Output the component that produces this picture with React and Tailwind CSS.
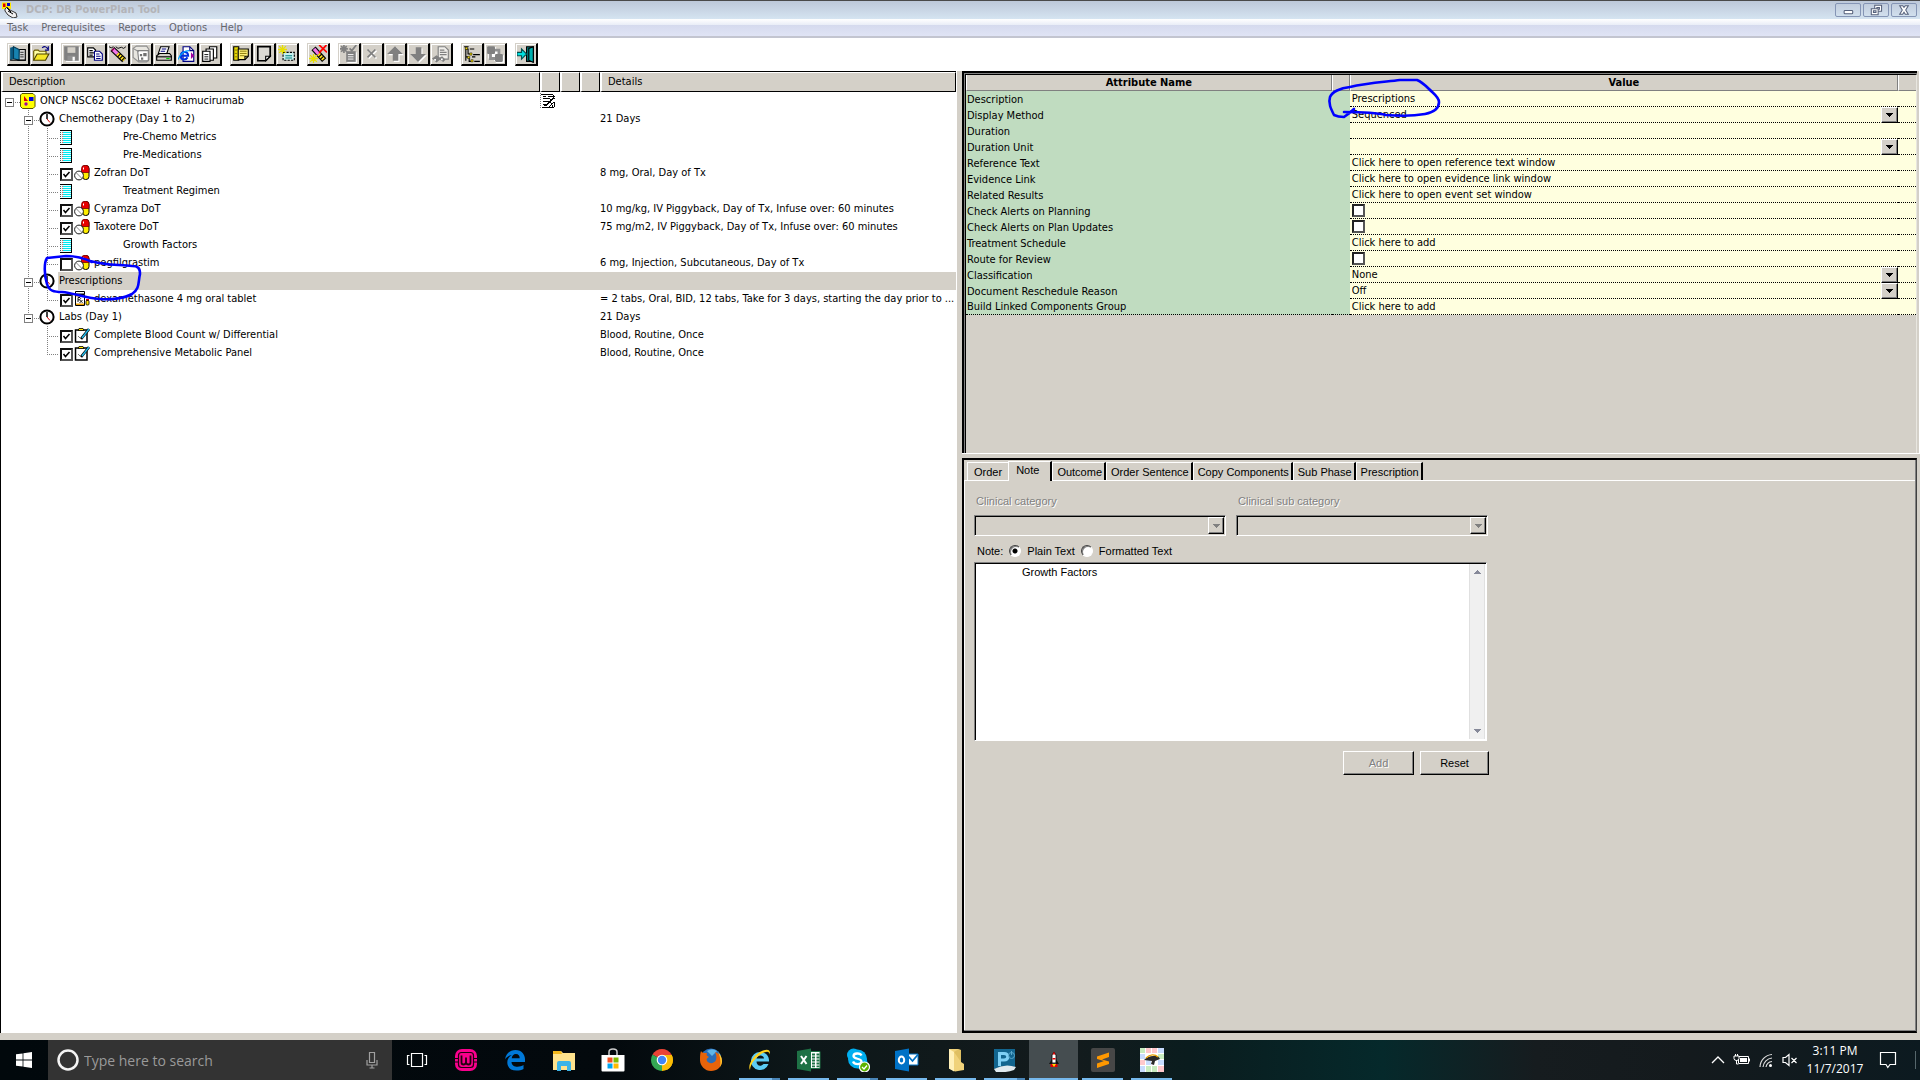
import React from "react";

const UI = "font-['DejaVu_Sans_Condensed','Noto_Sans',sans-serif]";
const MS = "font-['Liberation_Sans',sans-serif]";

/* ---------- toolbar drawings (16x16 grid) ---------- */

const Pic = ({ children, className = "size-[18px]" }) => (
  <svg viewBox="0 0 16 16" className={className} aria-hidden="true">
    {children}
  </svg>
);

const icons = {
  book: (
    <Pic>
      <path d="M9 4h5.500v9.500H8z" fill="#d8d8d8" stroke="#000" />
      <path d="M10 6.500h3M10 8.500h3M10 10.500h3" stroke="#555" />
      <path d="M1 2.500l3-1v11l-3 1z" fill="#0a5a80" />
      <path d="M4 1.500l5 2.500v9.500l-5-1.500z" fill="#1783b0" stroke="#043a55" />
      <path d="M1 13.500h14" stroke="#000" />
    </Pic>
  ),
  open: (
    <Pic>
      <path d="M1.500 13.500v-8l1-1h3l1 1h6v3" fill="#ffffa0" stroke="#6a5a00" />
      <path d="M1.500 13.500l3-5.500h10.500l-3 5.500z" fill="#f5e626" stroke="#4a4000" />
      <path d="M9 2.500q3-2.500 5 1M14.500 1v3.500h-3" stroke="#000080" fill="none" />
    </Pic>
  ),
  save: (
    <Pic>
      <path d="M2 2h13v13H3l-1-1z" fill="#fff" />
      <path d="M1 1h13v13H2l-1-1z" fill="#808080" />
      <path d="M4 2h7v5H4z" fill="#d4d0c8" />
      <path d="M4 9.500h7V14H4z" fill="#909090" />
      <path d="M8.500 10.500h2V14h-2z" fill="#fff" />
    </Pic>
  ),
  copy: (
    <Pic>
      <path d="M1.500 2.500h5l2 2v6h-7z" fill="#fff" stroke="#000" />
      <path d="M3 5h3M3 7h4M3 9h3" stroke="#000" />
      <path d="M7.500 5.500h4.500l2.500 2.500v5.500h-7z" fill="#fff" stroke="#000080" />
      <path d="M9 8h3M9 10h4M9 12h4" stroke="#000080" />
    </Pic>
  ),
  wand: (
    <Pic>
      <path d="M0 1.500l2 1 2-1M6 1.500l2 1.500 3-1 2 1 2-1.500" stroke="#000" strokeWidth=".8" fill="none" />
      <path d="M3 3.500l10.500 10" stroke="#000" strokeWidth="5" />
      <path d="M3.500 4l4 3.800" stroke="#f078e8" strokeWidth="3" />
      <path d="M3 3.500l1 1" stroke="#900050" strokeWidth="3" />
      <path d="M7.500 7.800l6 5.700" stroke="#ffe020" strokeWidth="3" strokeDasharray="1.500 1" />
    </Pic>
  ),
  cube: (
    <Pic>
      <path d="M1 3l3-2h9l2 3v9l-2 2H6l-5-4z" fill="#e8e6e0" stroke="#909090" />
      <path d="M5 5h9.500v9H6z" fill="#fff" stroke="#808080" />
      <path d="M1 3l5 3" stroke="#909090" fill="none" />
      <path d="M10 7h3v3h-3zM7 8h2v2H7zM8 11h2v2H8z" fill="#707070" />
    </Pic>
  ),
  print: (
    <Pic>
      <path d="M5 1.500h7.500l-2 6H3z" fill="#fff" stroke="#000" />
      <path d="M6 3.500h4M5 5.500h4" stroke="#000080" />
      <path d="M1.500 9.500l2.500-2h9l1.500 2v4h-13z" fill="#d4d0c8" stroke="#000" />
      <path d="M1 10.500h14" stroke="#000" />
      <path d="M10 11.500h3v1h-3z" fill="#00d000" />
    </Pic>
  ),
  ie: (
    <Pic>
      <path d="M4.500 1.500h6l3.500 3.500v9.500H4.500z" fill="#fff" stroke="#000080" />
      <path d="M10.500 1.500V5H14" stroke="#000080" fill="none" />
      <path d="M2.500 9.500h6.500c0-4.500-6.500-4.500-6.500 0s4.500 4 6 1.500" fill="none" stroke="#0030e0" strokeWidth="1.800" />
      <path d="M0 13c2-5 6-8 10-8" fill="none" stroke="#00a0ff" />
      <path d="M11.500 6.500v6l3-3z" fill="#a000a0" />
    </Pic>
  ),
  pages: (
    <Pic>
      <path d="M7.500 1.500h6.500v10H7.500z" fill="#fff" stroke="#000" />
      <path d="M4.500 3.500h6.500v10H4.500z" fill="#fff" stroke="#000" />
      <path d="M1.500 5.500h6.500v9H1.500z" fill="#fff" stroke="#000" />
      <path d="M3 8.500h3.500M3 10.500h3.500M3 12.500h3.500" stroke="#000" strokeWidth=".8" />
    </Pic>
  ),
  sheets: (
    <Pic>
      <path d="M1.500 1.500H6v12H1.500z" fill="#e8d800" stroke="#000" />
      <path d="M5.500 3.500h9v6.500l-3 3h-6z" fill="#fff27a" stroke="#000" />
      <path d="M7 5.500h6M7 7.500h6M7 9.500h4M2.500 4.500h2M2.500 7.500h2M2.500 10.500h2" stroke="#807000" strokeWidth=".8" />
      <path d="M14.500 10h-3v3" stroke="#000" fill="none" />
    </Pic>
  ),
  note: (
    <Pic>
      <path d="M2.500 1.500h11v8.500l-4 4h-7z" fill="#dcdad4" stroke="#000" strokeWidth="1.500" />
      <path d="M13.500 10h-4v4z" fill="#fff" stroke="#000" />
    </Pic>
  ),
  newPlan: (
    <Pic>
      <path d="M4.500 6.500h10v7h-10z" fill="#c8f0f0" stroke="#000" strokeDasharray="2 1" />
      <path d="M6.500 9.500h6M6.500 11.500h6" stroke="#008080" />
      <path d="M4 0v8M0 4h8M1 1l6 6M7 1L1 7" stroke="#e8e000" strokeWidth="1.200" />
    </Pic>
  ),
  wandX: (
    <Pic>
      <path d="M4 3l9.500 10.500" stroke="#000" strokeWidth="5" />
      <path d="M4.500 3.500l4 4.500" stroke="#f078e8" strokeWidth="3" />
      <path d="M8.500 8l5 5.500" stroke="#ffe020" strokeWidth="3" strokeDasharray="1.500 1" />
      <path d="M9 0l7 6.500M15.500 0L9 7" stroke="#f00" strokeWidth="1.500" />
      <path d="M4 8v8M0 12h8M1 9l6 6M7 9l-6 6" stroke="#e8e000" strokeWidth="1.200" />
    </Pic>
  ),
  check: (
    <Pic>
      <path d="M6.500 6.500H15V16H6.500z" fill="#fff" />
      <path d="M5.500 5.500H14V15H5.500z" fill="#808080" />
      <path d="M7 8.500h5M7 10.500h5M7 12.500h5" stroke="#fff" strokeWidth=".8" />
      <path d="M3.500 0v7M0 3.500h7M1 1l5 5M6 1L1 6M14.500 0l-4 5-2-2" stroke="#808080" strokeWidth="1.500" fill="none" />
    </Pic>
  ),
  cross: (
    <Pic>
      <path d="M5 5l7 7M12 5l-7 7" stroke="#fff" strokeWidth="1.500" />
      <path d="M4 4l7 7M11 4l-7 7" stroke="#808080" strokeWidth="1.500" />
    </Pic>
  ),
  up: (
    <Pic>
      <path d="M9 2l7 7h-4v6H7V9H2z" fill="#fff" />
      <path d="M8 1l7 7h-4v6H6V8H1z" fill="#808080" />
    </Pic>
  ),
  down: (
    <Pic>
      <path d="M9 16l7-7h-4V3H7v6H2z" fill="#fff" />
      <path d="M8 15l7-7h-4V2H6v6H1z" fill="#808080" />
    </Pic>
  ),
  find: (
    <Pic>
      <path d="M5.500 1.500h6l3 3v8h-9z" fill="#f0eeea" stroke="#808080" />
      <path d="M7 4.500h4M7 6.500h6M7 8.500h6" stroke="#808080" />
      <path d="M0 12l4-3 3 2 2-1 3 3-2 2-3-2-3 2.500z" fill="#808080" />
      <path d="M2 12.500h1.500V14H2zM8 12h1.500v1.500H8z" fill="#fff" />
    </Pic>
  ),
  tree: (
    <Pic>
      <path d="M2.500 2v12M2 3.500h3M4.500 4v4H7M2 10.500h3M5.500 11v3.500H7M1 1.500h4M6 3.500h4M9 8.500h6M8 10.500h3M10 14.500h5" stroke="#000" fill="none" />
      <path d="M2 2h2v2H2zM6 7h2v2H6zM4 10h2v2H4zM7 13h2v2H7z" fill="#e8d000" stroke="#000" strokeWidth=".4" />
    </Pic>
  ),
  link: (
    <Pic>
      <path d="M2 2h7v3h3v4h4v7H9l-3-4H2z" fill="#fff" />
      <rect x="1" y="1" width="7" height="7" rx="1" fill="#808080" />
      <path d="M4 8v4h4M8 4.500h3.500V8" stroke="#909090" strokeWidth="2.500" fill="none" />
      <rect x="8" y="8" width="7" height="7" rx="1" fill="#808080" />
    </Pic>
  ),
  exit: (
    <Pic>
      <path d="M8.500 1.500h6v13h-6z" fill="#008080" stroke="#000" />
      <path d="M10.500 3l4-1.500v14l-4-2z" fill="#00b0b0" stroke="#000" />
      <path d="M0 6.500h4v-3L8.500 8 4 12.500v-3H0z" fill="#00e0e0" stroke="#005050" />
    </Pic>
  ),
};

const toolbar = [
  [["book", "Plans"], ["open", "Open"]],
  [["save", "Save"], ["copy", "Copy"], ["wand", "Wizard"], ["cube", "Phases"], ["print", "Print"], ["ie", "Web"], ["pages", "Pages"]],
  [["sheets", "Sheets"], ["note", "Note"], ["newPlan", "New plan"]],
  [["wandX", "Remove"]],
  [["check", "Validate"], ["cross", "Delete"], ["up", "Move up"], ["down", "Move down"], ["find", "Find"]],
  [["tree", "Hierarchy"], ["link", "Link"]],
  [["exit", "Exit"]],
];

/* ---------- tree ---------- */

const Guide = ({ up, down, right, box }) => (
  <svg viewBox="0 0 19 18" className="h-[18px] w-[19px] shrink-0" shapeRendering="crispEdges" aria-hidden="true">
    <g stroke="#808080" strokeDasharray="1 1">
      {up && <path d="M8.500 0v9" />}
      {down && <path d="M8.500 10v8" />}
      {right && <path d="M8 10.500h11" />}
    </g>
    {box && (
      <>
        <rect x="4.500" y="6.500" width="8" height="8" fill="#fff" stroke="#808080" />
        <path d="M6 10.500h5" stroke="#000" />
      </>
    )}
  </svg>
);

const PlanIcon = () => (
  <svg viewBox="0 0 16 16" className="size-4" aria-hidden="true">
    <path d="M2 .5h11l2 2v11l-2 2H2.500l-2-2V2z" fill="#ff0" stroke="#555500" />
    <path d="M4 3v5h4z" fill="#e00000" />
    <rect x="9" y="4" width="4.500" height="4" fill="#0000e0" />
    <circle cx="6" cy="11" r="1.700" fill="#a000a0" />
  </svg>
);

const ClockIcon = () => (
  <svg viewBox="0 0 16 16" className="size-4" aria-hidden="true">
    <circle cx="8" cy="8" r="6.600" fill="#fff" stroke="#000" strokeWidth="2" />
    <path d="M8 3v5" stroke="#000" strokeWidth="1.500" />
    <path d="M8 8l3 3.500" stroke="#d00000" />
  </svg>
);

const NoteIcon = () => (
  <svg viewBox="0 0 12 15" className="h-[15px] w-3" shapeRendering="crispEdges" aria-hidden="true">
    <path d="M0 0h12v15H0z" fill="#e8ffff" />
    <path d="M3 2.500h8M3 4.500h8M3 6.500h8M3 8.500h8M3 10.500h8M3 12.500h8" stroke="#00e8f0" />
    <path d="M.5 0v15" stroke="#555" strokeDasharray="1 1" />
    <path d="M2.500 0v14" stroke="#f06060" strokeDasharray="1 1" />
    <path d="M0 .5h12M11.500 0v15M0 14.500h12" stroke="#000" />
  </svg>
);

const PillIcon = () => (
  <svg viewBox="0 0 16 16" className="size-4" aria-hidden="true">
    <rect x="8.500" y=".5" width="6.500" height="14" rx="3" fill="#ffee00" stroke="#000" />
    <path d="M7.500 7.500V3.500a3.700 3.300 0 0 1 7.500 0v4z" fill="#e80000" stroke="#700" strokeWidth=".8" />
    <path d="M9.500 2.500v2" stroke="#fff" />
    <circle cx="5" cy="10.500" r="4.400" fill="#fff" stroke="#000" strokeWidth=".9" />
    <path d="M2.500 8l5 5" stroke="#666" strokeWidth=".8" />
  </svg>
);

const BottleIcon = () => (
  <svg viewBox="0 0 16 16" className="size-4" aria-hidden="true">
    <path d="M1.500.5h9v2.500h-9z" fill="#fff" stroke="#000" />
    <path d="M1.500 3.500h9v11h-9z" fill="#fff" stroke="#000" />
    <path d="M2 4h8v1.500H2zM2 12.500h8v1.500H2z" fill="#f0a000" />
    <path d="M4 11V6.500h2q1.500 1-.5 2.300H4M5.500 8.800l3 3M8.500 9l-3 3" stroke="#000" fill="none" strokeWidth=".9" />
    <path d="M12 8h3v2h-3z" fill="#e00000" />
    <rect x="12" y="9.500" width="3" height="4.500" rx="1" fill="#ffe000" stroke="#000" strokeWidth=".8" />
  </svg>
);

const LabIcon = () => (
  <svg viewBox="0 0 16 16" className="size-4" aria-hidden="true">
    <path d="M1.500 3h11.500v12H1.500z" fill="#fff" stroke="#000" strokeWidth="1.500" />
    <path d="M4 3.500l1-2h4l1 2z" fill="#ffe600" stroke="#000" strokeWidth=".8" />
    <path d="M15 2L7 12" stroke="#000" strokeWidth="2.800" />
    <path d="M15 2L8 11" stroke="#20b8e8" strokeWidth="1.500" />
    <path d="M4 9l3 3" stroke="#777" />
  </svg>
);

const SheetIcon = () => (
  <svg viewBox="0 0 16 16" className="size-4" shapeRendering="crispEdges" aria-hidden="true">
    <path d="M.5 0v16" stroke="#777" strokeDasharray="1 1" />
    <path d="M1 1.500h12M3 3.500h3M8 3.500h4M3 5.500h7M3 8.500h6M3 11.500h4M2 14.500h12M13.500 2v2M10 6.500h2M14.500 9v5" stroke="#000" fill="none" />
    <path d="M15 3L6 13M12 3l3 3M9 14l5-5M4 13l3-2M10 8l3 6" stroke="#000" strokeWidth="1.300" fill="none" />
  </svg>
);

const Check = ({ label, checked, className = "" }) => (
  <span className={`relative block size-[13px] shrink-0 ${className}`}>
    <input
      type="checkbox"
      aria-label={label}
      defaultChecked={checked}
      className="peer block size-[13px] appearance-none border-2 border-[#111] border-b-[#555] border-r-[#555] bg-white"
    />
    <svg viewBox="0 0 13 13" className="pointer-events-none absolute inset-0 hidden size-[13px] peer-checked:block" aria-hidden="true">
      <path d="M3.500 6l2 2.500 4-4.500" fill="none" stroke="#000" strokeWidth="1.500" />
    </svg>
  </span>
);

const rows = [
  { level: 0, kind: "plan", text: "ONCP NSC62 DOCEtaxel + Ramucirumab", sheet: true },
  { level: 1, kind: "phase", text: "Chemotherapy (Day 1 to 2)", details: "21 Days" },
  { level: 2, kind: "note", text: "Pre-Chemo Metrics" },
  { level: 2, kind: "note", text: "Pre-Medications" },
  { level: 2, kind: "pill", checked: true, text: "Zofran DoT", details: "8 mg, Oral, Day of Tx" },
  { level: 2, kind: "note", text: "Treatment Regimen" },
  { level: 2, kind: "pill", checked: true, text: "Cyramza DoT", details: "10 mg/kg, IV Piggyback, Day of Tx, Infuse over: 60 minutes" },
  { level: 2, kind: "pill", checked: true, text: "Taxotere DoT", details: "75 mg/m2, IV Piggyback, Day of Tx, Infuse over: 60 minutes" },
  { level: 2, kind: "note", text: "Growth Factors" },
  { level: 2, kind: "pill", checked: false, last: true, text: "pegfilgrastim", details: "6 mg, Injection, Subcutaneous, Day of Tx" },
  { level: 1, kind: "phase", selected: true, text: "Prescriptions" },
  { level: 2, kind: "bottle", checked: true, last: true, text: "dexamethasone 4 mg oral tablet", details: "= 2 tabs, Oral, BID, 12 tabs, Take for 3 days, starting the day prior to ..." },
  { level: 1, kind: "phase", last: true, text: "Labs (Day 1)", details: "21 Days" },
  { level: 2, kind: "lab", checked: true, end: true, text: "Complete Blood Count w/ Differential", details: "Blood, Routine, Once" },
  { level: 2, kind: "lab", checked: true, end: true, last: true, text: "Comprehensive Metabolic Panel", details: "Blood, Routine, Once" },
];

const itemIcon = { pill: <PillIcon />, bottle: <BottleIcon />, lab: <LabIcon /> };

function TreeLabel({ row }) {
  const { level, kind, text, last, end, checked, selected } = row;
  if (level === 0)
    return (
      <div className="flex h-[18px] items-center">
        <Guide right box />
        <PlanIcon />
        <span className="pl-1">{text}</span>
      </div>
    );
  if (level === 1)
    return (
      <div className="flex h-[18px] items-center">
        <Guide />
        <Guide up down={!last} right box />
        <ClockIcon />
        <span className={`ml-[3px] flex-1 pl-px leading-[18px] ${selected ? "bg-[#d4d0c8]" : ""}`}>{text}</span>
      </div>
    );
  return (
    <div className="flex h-[18px] items-center">
      <Guide />
      <Guide up={!end} down={!end} />
      <Guide up down={!last} right />
      {kind === "note" ? (
        <>
          <span className="pl-0.5"><NoteIcon /></span>
          <span className="pl-[51px]">{text}</span>
        </>
      ) : (
        <>
          <Check label={text} checked={checked} className="ml-0.5 mt-0.5" />
          <span className="ml-px">{itemIcon[kind]}</span>
          <span className="pl-1">{text}</span>
        </>
      )}
    </div>
  );
}

const headCell = "h-5 border-b border-l-2 border-r border-t border-b-black border-l-white border-r-black border-t-white bg-[#d4d0c8] p-0 text-left font-normal";

function PlanTree() {
  return (
    <div className="min-w-0 border-l border-t border-black bg-white">
      <table className="w-full table-fixed border-separate border-spacing-0">
        <colgroup>
          <col className="w-[539px]" />
          <col className="w-5" />
          <col className="w-5" />
          <col className="w-5" />
          <col />
        </colgroup>
        <thead>
          <tr>
            <th className={`${headCell} leading-4`}><span className="pl-1.5">Description</span></th>
            <th className={headCell} aria-label="Notes" />
            <th className={headCell} aria-label="Flag" />
            <th className={headCell} aria-label="Link" />
            <th className={`${headCell} leading-4`}><span className="pl-1.5">Details</span></th>
          </tr>
        </thead>
        <tbody>
          {rows.map((row) => (
            <tr key={row.text}>
              <td className="h-[18px] p-0"><TreeLabel row={row} /></td>
              <td className={`p-0 ${row.selected ? "bg-[#d4d0c8]" : ""}`}>{row.sheet && <SheetIcon />}</td>
              <td className={`p-0 ${row.selected ? "bg-[#d4d0c8]" : ""}`} />
              <td className={`p-0 ${row.selected ? "bg-[#d4d0c8]" : ""}`} />
              <td className={`whitespace-nowrap p-0 ${row.selected ? "bg-[#d4d0c8]" : ""}`}>{row.details}</td>
            </tr>
          ))}
        </tbody>
      </table>
    </div>
  );
}

/* ---------- attribute grid ---------- */

const attributes = [
  ["Description", "input", "Prescriptions"],
  ["Display Method", "select", "Sequenced"],
  ["Duration", "input", ""],
  ["Duration Unit", "select", ""],
  ["Reference Text", "action", "Click here to open reference text window"],
  ["Evidence Link", "action", "Click here to open evidence link window"],
  ["Related Results", "action", "Click here to open event set window"],
  ["Check Alerts on Planning", "check"],
  ["Check Alerts on Plan Updates", "check"],
  ["Treatment Schedule", "action", "Click here to add"],
  ["Route for Review", "check"],
  ["Classification", "select", "None"],
  ["Document Reschedule Reason", "select", "Off"],
  ["Build Linked Components Group", "action", "Click here to add"],
];

const Arrow = ({ color = "#000" }) => (
  <svg viewBox="0 0 7 4" className="h-1 w-[7px]" shapeRendering="crispEdges" aria-hidden="true">
    <path d="M0 0h7L3.500 4z" fill={color} />
  </svg>
);

const raised = "border border-b-black border-l-white border-r-black border-t-white bg-[#d4d0c8] shadow-[inset_-1px_-1px_0_#808080]";

function ValueCell({ name, type, value }) {
  const id = name.toLowerCase().replace(/ /g, "-");
  if (type === "input")
    return <input id={id} defaultValue={value} className="block h-[15px] w-full bg-transparent px-0.5 outline-none" />;
  if (type === "check")
    return (
      <input
        id={id}
        type="checkbox"
        className="ml-0.5 block size-[13px] appearance-none border-2 border-[#222] border-b-[#555] border-r-[#555] bg-white"
      />
    );
  if (type === "action") return <button className="block h-[15px] px-0.5 leading-[15px]">{value}</button>;
  return (
    <div className="relative">
      <select id={id} className="block h-[15px] w-full appearance-none bg-transparent pl-0.5 leading-[15px]">
        <option>{value}</option>
      </select>
      <span className={`pointer-events-none absolute right-0 top-0 flex h-4 w-[17px] items-center justify-center ${raised}`}>
        <Arrow />
      </span>
    </div>
  );
}

const gridHead = "h-4 border-b border-l border-b-[#808080] border-l-white bg-[#d4d0c8] p-0 text-center font-bold leading-[15px]";
const dotted = "border-b border-dotted border-b-black bg-[#ffffdf]";

function AttributeGrid() {
  return (
    <div className="border-b border-r border-b-white border-r-white pr-0.5">
      <div className="h-full border-l-2 border-t-2 border-black">
        <div className="h-full border-l border-t border-[#808080]">
          <div className="h-full border-l border-r border-t border-l-black border-r-[#e8e6e0] border-t-black bg-[#d4d0c8]">
            <table className="w-full table-fixed border-separate border-spacing-0">
              <colgroup>
                <col className="w-[38.5%]" />
                <col className="w-[18px]" />
                <col />
                <col className="w-[18px]" />
              </colgroup>
              <thead>
                <tr>
                  <th className={`${gridHead} border-r border-r-[#808080]`}>Attribute Name</th>
                  <th className={`${gridHead} border-r border-r-[#808080]`} aria-label="Status" />
                  <th className={`${gridHead} border-r border-r-[#808080]`}>Value</th>
                  <th className={gridHead} aria-label="More" />
                </tr>
              </thead>
              <tbody>
                {attributes.map(([name, type, value], i) => {
                  const green = i === attributes.length - 1 ? "border-b border-dotted border-b-black bg-[#c0dcc0]" : "bg-[#c0dcc0]";
                  return (
                    <tr key={name}>
                      <td className={`h-4 p-0 pl-px leading-[15px] ${green}`}>
                        <label htmlFor={name.toLowerCase().replace(/ /g, "-")}>{name}</label>
                      </td>
                      <td className={`p-0 ${green}`} />
                      <td className={`h-4 p-0 leading-[15px] ${dotted}`}>
                        <ValueCell name={name} type={type} value={value} />
                      </td>
                      <td className={`p-0 ${dotted}`} />
                    </tr>
                  );
                })}
              </tbody>
            </table>
          </div>
        </div>
      </div>
    </div>
  );
}

/* ---------- detail pane ---------- */

const tabs = ["Order", "Note", "Outcome", "Order Sentence", "Copy Components", "Sub Phase", "Prescription"];

const etched = "text-[#808080] [text-shadow:1px_1px_0_#fff]";
const sunken = "border border-b-white border-l-[#808080] border-r-white border-t-[#808080] shadow-[inset_1px_1px_0_#000]";

const DisabledCombo = ({ id, label }) => (
  <div className="flex w-[252px] flex-col gap-1.5">
    <label htmlFor={id} className={`pl-0.5 leading-4 ${etched}`}>{label}</label>
    <div className="relative">
      <select id={id} disabled className={`block h-[21px] w-full appearance-none bg-[#d4d0c8] ${sunken}`} />
      <span className={`pointer-events-none absolute right-0.5 top-0.5 flex h-[17px] w-4 items-center justify-center ${raised}`}>
        <Arrow color="#808080" />
      </span>
    </div>
  </div>
);

const Radio = ({ label, checked }) => (
  <label className="flex items-center gap-1.5">
    <input
      type="radio"
      name="note-format"
      defaultChecked={checked}
      className="size-3 appearance-none rounded-full border border-b-white border-l-[#404040] border-r-white border-t-[#404040] bg-white shadow-[inset_1px_1px_0_#808080] checked:bg-[radial-gradient(circle,#000_2px,#fff_3px)]"
    />
    <span>{label}</span>
  </label>
);

function DetailPane() {
  return (
    <div className="pr-[3px] pt-1">
      <div className={`h-full border-b-2 border-l-2 border-r border-t-2 border-black border-r-[#404040] bg-[#d4d0c8] ${MS} text-[11px]`}>
        <div className="flex h-full flex-col border-b border-r border-[#808080]">
          <div className="flex h-[21px] items-end border-b border-b-white pl-[3px]" role="tablist">
            {tabs.map((t) => (
              <button
                key={t}
                role="tab"
                aria-selected={t === "Note"}
                className={
                  t === "Note"
                    ? "-mb-px flex h-5 items-start border-l border-r-2 border-t border-l-white border-r-black border-t-white bg-[#d4d0c8] pl-[7px] pr-[11px] leading-4"
                    : t === "Order"
                    ? "h-[18px] border-l border-t border-white px-1.5 leading-4"
                    : "h-[18px] border-l border-r-2 border-t border-l-white border-r-black border-t-white pl-1 pr-0.5 leading-4"
                }
              >
                {t}
              </button>
            ))}
          </div>
          <div className="flex-1 border-l border-l-white pl-[9px] pt-3">
            <div className="flex gap-2.5">
              <DisabledCombo id="category" label="Clinical category" />
              <DisabledCombo id="sub-category" label="Clinical sub category" />
            </div>
            <div className="flex h-[26px] items-center gap-1.5 pl-[3px] pt-1">
              <label htmlFor="note-text">Note:</label>
              <div className="flex gap-1.5">
                <Radio label="Plain Text" checked />
                <Radio label="Formatted Text" />
              </div>
            </div>
            <div className={`flex h-[179px] w-[513px] bg-white p-px ${sunken}`}>
              <textarea
                id="note-text"
                defaultValue="Growth Factors"
                className="h-full flex-1 resize-none overflow-hidden bg-white pl-[46px] leading-4 outline-none"
              />
              <div className="flex w-4 flex-col items-center justify-between border-l border-r border-l-[#e0e0e0] border-r-[#e0e0e0] bg-[#f0f0f0] py-1.5">
                <span className="rotate-180"><Arrow color="#868999" /></span>
                <Arrow color="#868999" />
              </div>
            </div>
            <div className="flex w-[515px] justify-end gap-1.5 pt-2.5">
              <button disabled className={`h-6 w-[71px] ${raised} ${etched}`}>Add</button>
              <button className={`h-6 w-[69px] ${raised}`}>Reset</button>
            </div>
          </div>
        </div>
      </div>
    </div>
  );
}

/* ---------- title bar ---------- */

const AppIcon = () => (
  <svg viewBox="0 0 16 16" className="size-4" aria-hidden="true">
    <path d="M0 .5h9v6.500H0z" fill="#ffe800" />
    <path d="M1 1.500h2.500v3.500H1z" fill="#e00000" />
    <path d="M5 1h3v3H5z" fill="#0000d0" />
    <path d="M3 7l2-2 3 3 6 3 1 4-4 1-5-3-3-4z" fill="#f0f0f0" stroke="#333" />
    <path d="M6 9l5 3M5 6l4 4" stroke="#000" />
  </svg>
);

const winIcons = {
  Minimize: <rect x="3.500" y="7.500" width="10" height="4" rx="1" fill="#fff" stroke="#55607a" strokeWidth="1.200" />,
  Restore: (
    <g fill="#fff" stroke="#55607a" strokeWidth="1.200">
      <path d="M6.500 1.500h8v7h-8z" />
      <path d="M9 4h3v2H9z" />
      <path d="M2.500 5.500h8v7h-8z" />
      <path d="M5 8h3v2H5z" fill="#c0cfe0" />
    </g>
  ),
  Close: (
    <path d="M3 2h3.500L8 4l1.500-2H13l-3 5 3 5H9.500L8 9.500 6.500 12H3l3-5z" fill="#fff" stroke="#55607a" strokeWidth="1.200" />
  ),
};

/* ---------- taskbar ---------- */

const T = ({ children, box = "0 0 24 24" }) => (
  <svg viewBox={box} className="size-6" aria-hidden="true">{children}</svg>
);

const apps = [
  {
    name: "Task View",
    icon: (
      <T>
        <path d="M6.500 5.500h11v13h-11zM4.500 7.500H2.500v9h2M19.500 7.500h2v9h-2" fill="none" stroke="#fff" strokeWidth="1.200" />
      </T>
    ),
  },
  {
    name: "Workspace",
    icon: (
      <T>
        <rect x="1" y="1" width="22" height="22" rx="7" fill="#f9008c" />
        <path d="M1 10.500h4M1 14h4M19 10.500h4M19 14h4" stroke="#10060c" strokeWidth="1.200" />
        <rect x="4.500" y="4.500" width="15" height="15" rx="3" fill="none" stroke="#20020f" strokeWidth="1.200" />
        <path d="M7.500 7.500v7q0 2 2 2t2.500-2v-5v5q.5 2 2.500 2t2-2v-7" fill="none" stroke="#20020f" strokeWidth="1.800" />
      </T>
    ),
  },
  {
    name: "Edge",
    icon: (
      <T>
        <path
          d="M2 11.500C3 5 7.500 2 12.500 2 19 2 22 7 22 11v3H8.500c.2 3.500 3 4.800 6 4.800 2.300 0 4.300-.7 6-1.700V21c-2 1-4.300 1.600-7 1.600C7.500 22.600 4.300 19 4.300 14.500c0-3.500 2-6.200 4.500-7.500C5.500 7.500 3.200 9.200 2 11.500zM8.700 10.300h8c0-2.500-1.200-4.300-3.800-4.300-2.400 0-3.800 1.800-4.200 4.300z"
          fill="#0078d7"
        />
      </T>
    ),
  },
  {
    name: "File Explorer",
    icon: (
      <T>
        <path d="M1 3h8l2 2h12v17H1z" fill="#ffe28c" />
        <path d="M1 3h8l1 3H1z" fill="#f3b71b" />
        <path d="M5 23v-8q0-2 2-2h10q2 0 2 2v8h-4v-5H9v5z" fill="#3cb4e7" />
      </T>
    ),
  },
  {
    name: "Store",
    icon: (
      <T>
        <path d="M8 7V4q0-3 4-3t4 3v3" fill="none" stroke="#ccc" strokeWidth="1.500" />
        <path d="M.5 7h23v15.500q0 1-1 1h-21q-1 0-1-1z" fill="#fff" />
        <path d="M6.500 9.500h5v5h-5z" fill="#f25022" />
        <path d="M12.500 9.500h5v5h-5z" fill="#7fba00" />
        <path d="M6.500 15.500h5v5h-5z" fill="#00a4ef" />
        <path d="M12.500 15.500h5v5h-5z" fill="#ffb900" />
      </T>
    ),
  },
  {
    name: "Chrome",
    icon: (
      <T>
        <path d="M12 12L2.500 6.500A11 11 0 0 1 21.500 6.500z" fill="#ea4335" />
        <path d="M12 12l9.500-5.500A11 11 0 0 1 12 23z" fill="#fbbc05" />
        <path d="M12 12v11A11 11 0 0 1 2.500 6.500z" fill="#34a853" />
        <path d="M12 7h9.700a11 11 0 0 1-5.200 15L12 12z" fill="#fbbc05" />
        <circle cx="12" cy="12" r="5.300" fill="#fff" />
        <circle cx="12" cy="12" r="4.200" fill="#4285f4" />
      </T>
    ),
  },
  {
    name: "Firefox",
    icon: (
      <T>
        <circle cx="12" cy="11" r="10.500" fill="#2a6db8" />
        <path d="M8 3q5-3.500 10 0l-5 5z" fill="#5fb5e8" />
        <path d="M2 3c1 2 3 2 6 2-1 2 0 3 2 4-2 1-3 2-2 4 2 3 7 3 9-1 1-3 0-6-1-8 5 2 7 6 7 9 0 6-5 10-11 10S1 18 1 12c0-4 0-6 1-9z" fill="#e8630a" />
        <path d="M19 4c4 4 5.500 10 2 15 1-5 .5-10-2-15z" fill="#ffcb2e" />
      </T>
    ),
  },
  {
    name: "Internet Explorer",
    open: true,
    stacked: true,
    icon: (
      <T>
        <path d="M12 4a9 9 0 1 0 8.500 12h-5c-3 3.500-7 1.500-7-2.500H21C21.500 8 17.500 4 12 4zM8.500 10.500c1-4 7-4 7.500 0z" fill="#5cccf5" />
        <path d="M2 22C-1 17 6 6 15 2.500c5-2 8-.5 6.500 4 0-3-2-3.500-5.500-2C9 7.500 2 16 2 22z" fill="#ffd21e" />
      </T>
    ),
  },
  {
    name: "Excel",
    open: true,
    icon: (
      <T>
        <path d="M13 3.500h10v17H13z" fill="#fff" stroke="#1e7145" />
        <path d="M15 6.500h3M19.500 6.500h3M15 9.500h3M19.500 9.500h3M15 12.500h3M19.500 12.500h3M15 15.500h3M19.500 15.500h3M15 18.300h3M19.500 18.300h3" stroke="#1e7145" strokeWidth="1.800" />
        <path d="M0 3l14-2.500v23L0 21z" fill="#1e7145" />
        <path d="M4 8l5.500 8M9.500 8L4 16" stroke="#fff" strokeWidth="2" />
      </T>
    ),
  },
  {
    name: "Skype",
    open: true,
    stacked: true,
    icon: (
      <T>
        <circle cx="7.500" cy="7" r="6.500" fill="#00aff0" />
        <circle cx="15" cy="14.500" r="6.500" fill="#00aff0" />
        <circle cx="11.500" cy="11" r="9.500" fill="#00aff0" />
        <path d="M15.500 7.500C14 4.500 7.500 5 7.500 8c0 3.500 8 2 8 5.500 0 3.500-7 3.500-8.500 0" fill="none" stroke="#fff" strokeWidth="2.300" />
        <circle cx="18.500" cy="19" r="5" fill="#5db300" stroke="#fff" strokeWidth="1.200" />
        <path d="M16 19l2 2 3-3.500" fill="none" stroke="#fff" strokeWidth="1.300" />
      </T>
    ),
  },
  {
    name: "Outlook",
    open: true,
    icon: (
      <T>
        <path d="M12 6h11v11H12z" fill="#fff" stroke="#0072c6" />
        <path d="M13 8l4.500 5L23 6.500" fill="none" stroke="#0072c6" strokeWidth="1.800" />
        <path d="M0 3l14-2.500v23L0 21z" fill="#0072c6" />
        <ellipse cx="6.500" cy="12" rx="2.700" ry="3.500" fill="none" stroke="#fff" strokeWidth="2" />
      </T>
    ),
  },
  {
    name: "Documents",
    open: true,
    icon: (
      <T>
        <path d="M5 1h9l3 1v12l3 2v6l-9 1.500-6-3z" fill="#f0d27a" />
        <path d="M5 1l5 3v19.500l-5-3z" fill="#fff0b8" />
        <path d="M10 4l4-2.500 3 .5v12" fill="#dfbf62" />
      </T>
    ),
  },
  {
    name: "PowerChart",
    open: true,
    stacked: true,
    icon: (
      <T>
        <path d="M1 1h21v18q-9-3-21 2z" fill="#12658f" />
        <path d="M6.500 18V5.500h4.500c5 0 5 6.500 0 6.500H7" fill="none" stroke="#7fd0f5" strokeWidth="3" />
        <circle cx="18.500" cy="7.500" r="3" fill="none" stroke="#5aa8cc" />
        <path d="M18.500 3v4" stroke="#5aa8cc" />
        <path d="M1 21q11-6 22-2l-2 3q-8 3-18 2z" fill="#dfe9ee" />
      </T>
    ),
  },
  {
    name: "DB PowerPlan Tool",
    open: true,
    active: true,
    icon: (
      <T>
        <path d="M12 4l2 3v8h-4V7z" fill="#fff" stroke="#000" strokeWidth=".8" />
        <path d="M12 3.500l1.500 3h-3zM10.500 10h3v1.500h-3z" fill="#d00" />
        <path d="M10 11l-3 5h3zM14 11l3 5h-3z" fill="#111" />
        <path d="M8.500 16h7v3h-7z" fill="#e00000" />
        <path d="M10 16h4l-2 3z" fill="#ffd800" />
      </T>
    ),
  },
  {
    name: "Sublime Text",
    open: true,
    icon: (
      <T>
        <rect width="24" height="24" rx="2" fill="#474747" />
        <path d="M6 8.500L18 4.500V9l-7 2.500 7 2V16L6 20v-4.500l7-2.500-7-2z" fill="#ff9800" />
      </T>
    ),
  },
  {
    name: "Toad",
    open: true,
    icon: (
      <T>
        <path d="M0 0h24v24H0z" fill="#fff" />
        <path d="M0 0h5v5H0zM18 6h6v5h-6zM6 18h5v6H6zM12 18h5v6h-5z" fill="#c8ecc0" />
        <path d="M6 0h5v5H6zM0 12h5v5H0zM18 18h6v6h-6zM12 0h5v5h-5z" fill="#ffc8cc" />
        <path d="M18 0h6v5h-6zM0 6h5v5H0zM18 12h6v5h-6zM0 18h5v6H0zM6 12h5v5H6z" fill="#c8dcff" />
        <path d="M4 12c3-3 6-4 9-4 3-1 6 0 7 3l-5 2-1 4-3-1 1-3z" fill="#2a2a2a" />
        <path d="M6 10c4-4 9-4 12-1" stroke="#e8a000" strokeWidth="1.400" fill="none" />
      </T>
    ),
  },
];

function Taskbar() {
  return (
    <footer className="flex h-10 items-stretch bg-[linear-gradient(90deg,#01080c_0%,#03090d_32%,#0d1719_42%,#131b1d_56%,#0a1c1e_62%,#05292b_72%,#161c1f_80%,#141a1d_88%,#0c1a20_100%)] font-['Open_Sans','Noto_Sans',sans-serif] text-white">
      <button aria-label="Start" className="flex w-12 items-center justify-center">
        <svg viewBox="0 0 16 16" className="size-4" aria-hidden="true">
          <path d="M0 2.300L6.600 1.400v6.100H0zM7.400 1.300L16 0v7.500H7.400zM0 8.400h6.600v6.200L0 13.700zM7.400 8.400H16V16l-8.600-1.200z" fill="#fff" />
        </svg>
      </button>
      <label className="flex w-[344px] items-center bg-[#333] pl-2 pr-3">
        <svg viewBox="0 0 24 24" className="size-6" aria-hidden="true">
          <circle cx="12" cy="12" r="9.500" fill="none" stroke="#f4f4f4" strokeWidth="2.500" />
        </svg>
        <input
          aria-label="Search"
          placeholder="Type here to search"
          className="min-w-0 flex-1 bg-transparent pl-1 text-[14px] outline-none placeholder:text-[#9a9a9a]"
        />
        <svg viewBox="0 0 16 20" className="h-5 w-4" aria-hidden="true">
          <path d="M5.500 2.500h5v10h-5zM3 10v5h10v-5M8 15v3M5.500 18h5" fill="none" stroke="#a0a0a0" strokeWidth="1.200" />
        </svg>
      </label>
      <nav className="flex">
        {apps.map((a) => (
          <button
            key={a.name}
            aria-label={a.name}
            className={`relative flex w-[49px] items-center justify-center ${a.active ? "bg-[#454d50]" : ""}`}
          >
            {a.icon}
            {a.open && <span className={`absolute bottom-0 h-0.5 bg-[#76b9ed] ${a.active ? "inset-x-0" : "inset-x-1"}`} />}
            {a.stacked && <span className="absolute bottom-0 right-1 h-0.5 w-2 bg-[#4a86b8]" />}
          </button>
        ))}
      </nav>
      <div className="ml-auto flex items-center">
        <button aria-label="Show hidden icons" className="flex w-6 justify-center">
          <svg viewBox="0 0 16 16" className="size-4" aria-hidden="true"><path d="M2 11l6-6 6 6" fill="none" stroke="#fff" strokeWidth="1.300" /></svg>
        </button>
        <span className="flex w-6 justify-center">
          <svg viewBox="0 0 18 16" className="h-4 w-[18px]" aria-hidden="true">
            <path d="M5.500 4.500h10v7h-10zM16.500 6.500v3" fill="none" stroke="#fff" />
            <path d="M7 6h7v4H7z" fill="#fff" />
            <path d="M1 4h5v2.500q0 2-2.500 2T1 6.500zM2.500 4V2M4.500 4V2M3.500 8v4h2" fill="#10181b" stroke="#fff" />
          </svg>
        </span>
        <span className="flex w-6 justify-center">
          <svg viewBox="0 0 16 16" className="size-4" aria-hidden="true">
            <g fill="none" stroke="#ddd" strokeWidth="1.200">
              <path d="M2 15A13 13 0 0 1 14 2.500" />
              <path d="M5 15A10 10 0 0 1 14 6" />
              <path d="M8 15A7 7 0 0 1 14 9.500" />
            </g>
            <circle cx="12.500" cy="13.500" r="1.500" fill="#fff" />
          </svg>
        </span>
        <span className="flex w-6 justify-center">
          <svg viewBox="0 0 16 16" className="size-4" aria-hidden="true">
            <path d="M1 5.500h2.500L7 2.500v11L3.500 10.500H1zM9.500 6l5 5M14.500 6l-5 5" fill="none" stroke="#fff" strokeWidth="1.200" />
          </svg>
        </span>
        <div className="flex w-[66px] flex-col items-center text-[12px] leading-[18px]">
          <span>3:11 PM</span>
          <span>11/7/2017</span>
        </div>
        <button aria-label="Notifications" className="flex w-12 items-center justify-center border-r border-r-[#56676c] pr-2">
          <svg viewBox="0 0 18 18" className="size-[18px]" aria-hidden="true">
            <path d="M1.500 1.500h15v12H11L8.800 16.500 7 13.500H1.500z" fill="none" stroke="#fff" strokeWidth="1.200" />
          </svg>
        </button>
        <span className="w-1" />
      </div>
    </footer>
  );
}

/* ---------- pen marks drawn over the window ---------- */

const PenMarks = () => (
  <svg className="pointer-events-none absolute left-0 top-0 h-[320px] w-[1460px]" viewBox="0 0 1460 320" aria-hidden="true">
    <g fill="none" stroke="#0000ff" strokeWidth="2.600" strokeLinecap="round" strokeLinejoin="round">
      <path d="M92 262C84 258 74 256 66 256L47 258C44 262 44 275 47 284C49 291 54 292 62 292C74 293 84 298 100 299C112 300 125 298 132 294C140 289 138 282 140 274C140 268 138 266 132 266C122 265 112 265 106 264C98 263 94 262 90 261" />
      <path d="M1350 87C1366 83 1384 82 1400 80L1417 80C1422 82 1425 85 1429 89C1434 94 1439 97 1439 102C1439 108 1435 112 1425 114C1414 116 1398 116 1386 115C1374 112 1360 112 1344 112M1350 87C1340 88 1332 92 1330 97C1328 103 1331 109 1334 115C1338 117 1342 117 1344 117C1347 115 1351 112 1354 109" />
    </g>
  </svg>
);

export default function App() {
  return (
    <div className={`relative flex min-h-screen flex-col overflow-hidden bg-[#d4d0c8] ${UI} text-[11px] text-black`}>
      <header className="flex h-[19px] items-center justify-between border-t border-t-[#4a4a4a] bg-[linear-gradient(#bdc8d9,#d5e4f1)] pl-0.5 pr-[3px]">
        <div className="flex items-center gap-2 font-bold text-[#b3b4b8]">
          <AppIcon />
          <h1 className="pt-px">DCP: DB PowerPlan Tool</h1>
        </div>
        <div className="flex gap-0.5">
          {Object.keys(winIcons).map((n) => (
            <button key={n} aria-label={n} className="flex h-3.5 w-[26px] items-center justify-center rounded-xs border border-[#8595b5]">
              <svg viewBox="0 0 16 14" className="h-3 w-3.5" aria-hidden="true">{winIcons[n]}</svg>
            </button>
          ))}
        </div>
      </header>
      <nav className="flex h-[19px] items-end gap-[13px] border-b-2 border-b-[#c3c5d0] bg-[linear-gradient(#fff_0%,#e9edf7_35%,#d5daee_36%,#e0e4f5_100%)] pl-[7px] leading-4 text-[#66676c]">
        {["Task", "Prerequisites", "Reports", "Options", "Help"].map((m) => (
          <button key={m}>{m}</button>
        ))}
      </nav>
      <div className="flex h-[33px] items-center gap-2 bg-white pl-[7px]" role="toolbar">
        {toolbar.map((group, i) => (
          <div key={i} className="flex">
            {group.map(([key, label]) => (
              <button
                key={key}
                aria-label={label}
                className="flex size-[23px] items-center justify-center border-b-2 border-l border-r-2 border-t border-b-black border-l-[#d4d0c8] border-r-black border-t-[#d4d0c8] bg-[#d4d0c8] shadow-[inset_1px_1px_0_#fff]"
              >
                {icons[key]}
              </button>
            ))}
          </div>
        ))}
      </div>
      <main className="grid flex-1 grid-cols-[minmax(0,956fr)_minmax(0,964fr)] pb-[7px]">
        <PlanTree />
        <div className="grid grid-rows-[383fr_579fr] border-l border-l-white pl-[5px]">
          <AttributeGrid />
          <DetailPane />
        </div>
      </main>
      <Taskbar />
      <PenMarks />
    </div>
  );
}
